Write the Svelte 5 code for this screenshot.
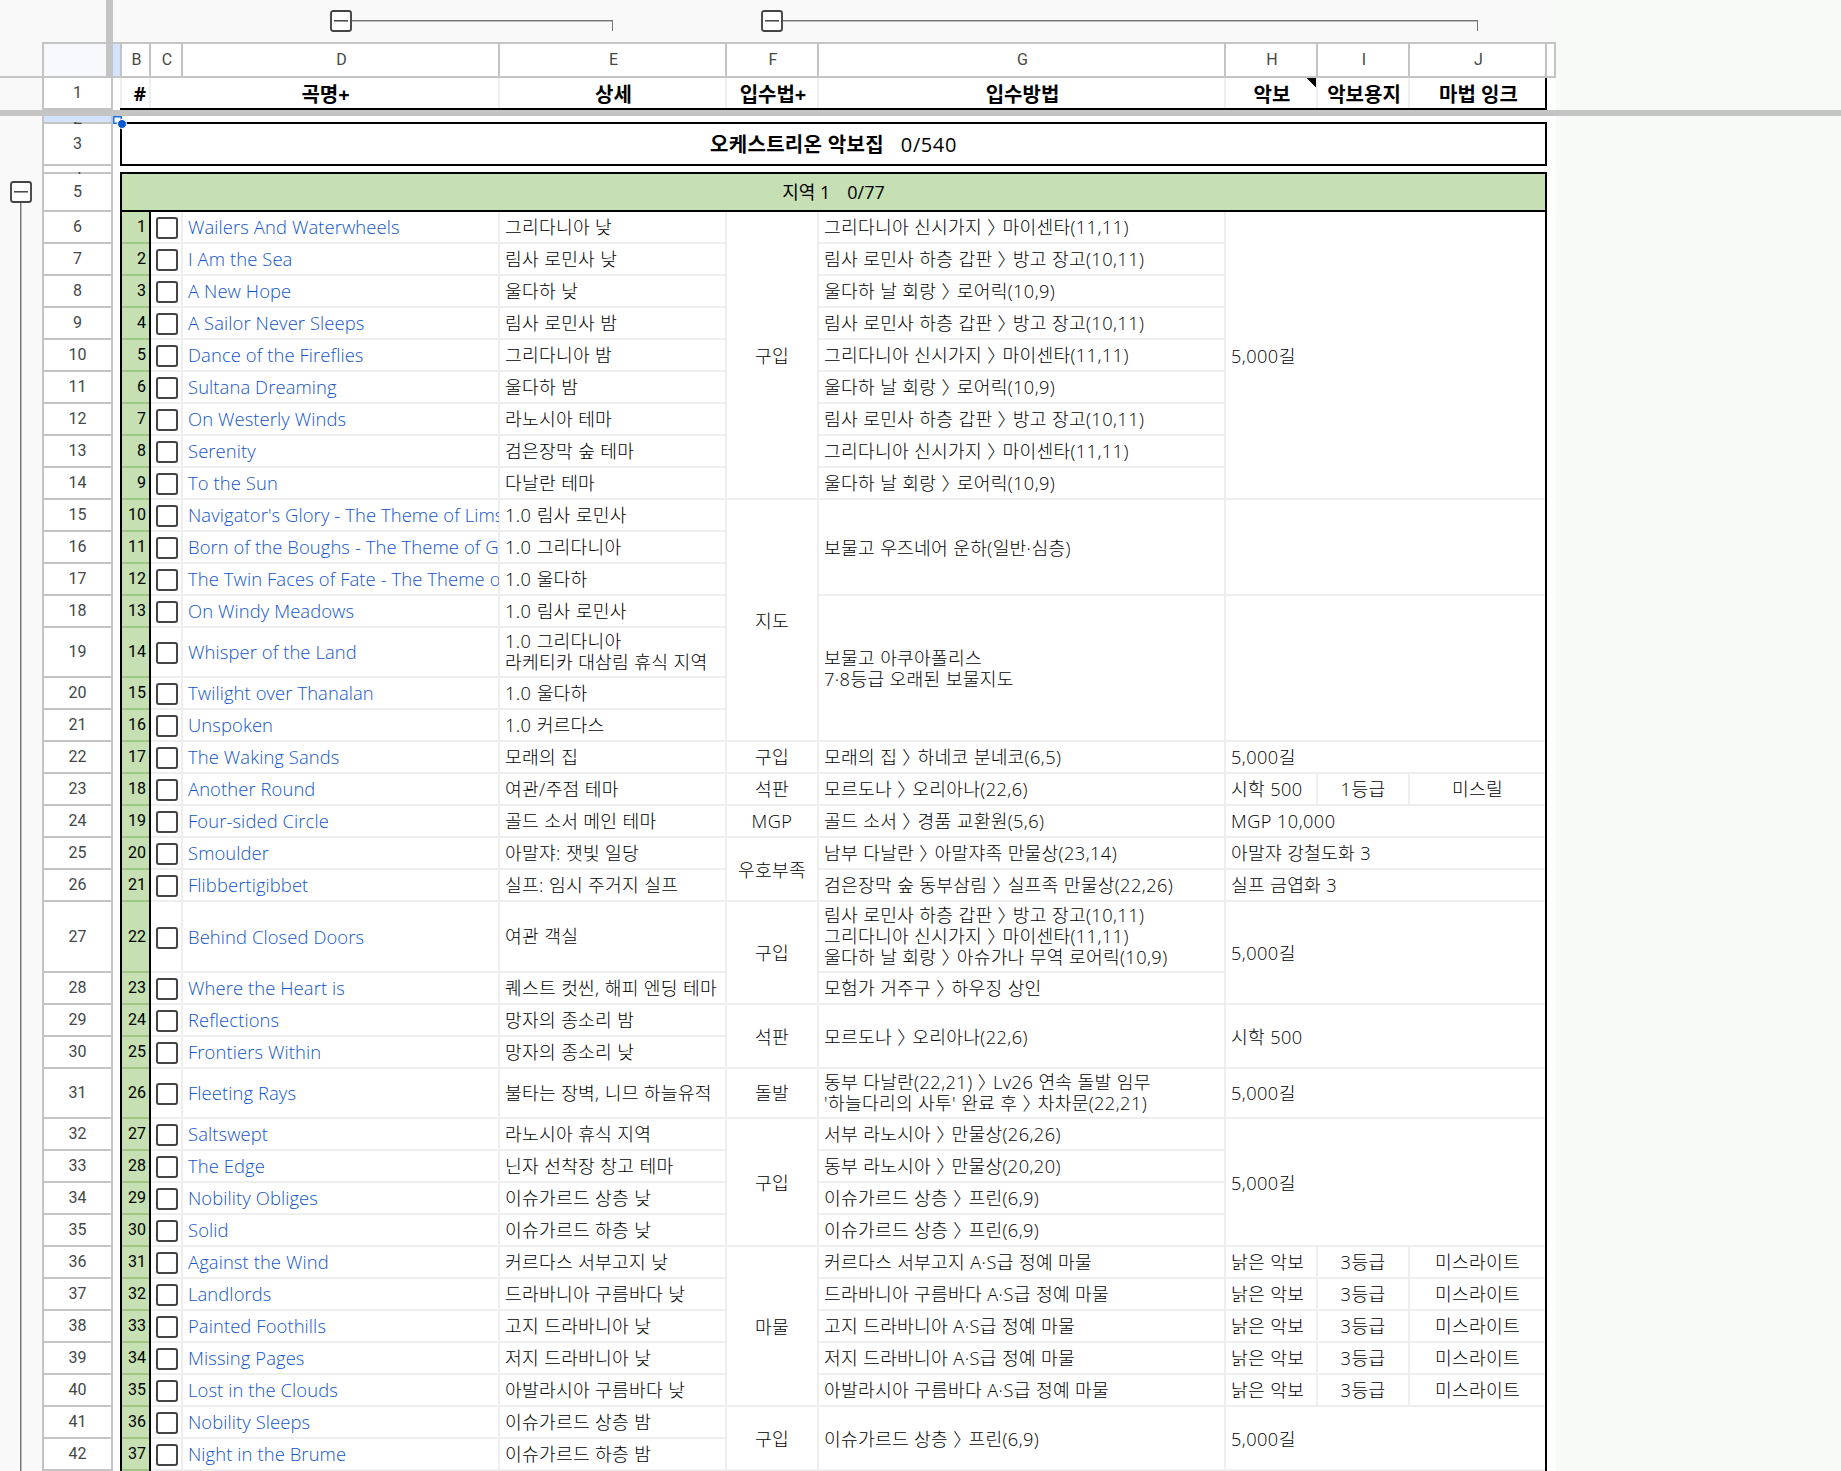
<script lang="ts">
  type Cell = { text: string; rows?: number };
  type Song = {
    name: string;
    desc: string;
    height?: number;
    how?: Cell;
    where?: Cell;
    price?: Cell;
    paper?: string;
    ink?: string;
  };

  const limsa = '림사 로민사 하층 갑판 〉방고 장고(10,11)';
  const gridania = '그리다니아 신시가지 〉마이센타(11,11)';
  const uldah = '울다하 날 회랑 〉로어릭(10,9)';
  const one = (text: string) => ({ text });
  const hunt = { price: one('낡은 악보'), paper: '3등급', ink: '미스라이트' };

  const songs: Song[] = [
    { name: 'Wailers And Waterwheels', desc: '그리다니아 낮', how: { text: '구입', rows: 9 }, where: one(gridania), price: { text: '5,000길', rows: 9 } },
    { name: 'I Am the Sea', desc: '림사 로민사 낮', where: one(limsa) },
    { name: 'A New Hope', desc: '울다하 낮', where: one(uldah) },
    { name: 'A Sailor Never Sleeps', desc: '림사 로민사 밤', where: one(limsa) },
    { name: 'Dance of the Fireflies', desc: '그리다니아 밤', where: one(gridania) },
    { name: 'Sultana Dreaming', desc: '울다하 밤', where: one(uldah) },
    { name: 'On Westerly Winds', desc: '라노시아 테마', where: one(limsa) },
    { name: 'Serenity', desc: '검은장막 숲 테마', where: one(gridania) },
    { name: 'To the Sun', desc: '다날란 테마', where: one(uldah) },
    { name: "Navigator's Glory - The Theme of Lims", desc: '1.0 림사 로민사', how: { text: '지도', rows: 7 }, where: { text: '보물고 우즈네어 운하(일반·심층)', rows: 3 }, price: { text: '', rows: 3 } },
    { name: 'Born of the Boughs - The Theme of G', desc: '1.0 그리다니아' },
    { name: 'The Twin Faces of Fate - The Theme of', desc: '1.0 울다하' },
    { name: 'On Windy Meadows', desc: '1.0 림사 로민사', where: { text: '보물고 아쿠아폴리스\n7·8등급 오래된 보물지도', rows: 4 }, price: { text: '', rows: 4 } },
    { name: 'Whisper of the Land', desc: '1.0 그리다니아\n라케티카 대삼림 휴식 지역', height: 50 },
    { name: 'Twilight over Thanalan', desc: '1.0 울다하' },
    { name: 'Unspoken', desc: '1.0 커르다스' },
    { name: 'The Waking Sands', desc: '모래의 집', how: one('구입'), where: one('모래의 집 〉하네코 분네코(6,5)'), price: one('5,000길') },
    { name: 'Another Round', desc: '여관/주점 테마', how: one('석판'), where: one('모르도나 〉오리아나(22,6)'), price: one('시학 500'), paper: '1등급', ink: '미스릴' },
    { name: 'Four-sided Circle', desc: '골드 소서 메인 테마', how: one('MGP'), where: one('골드 소서 〉경품 교환원(5,6)'), price: one('MGP 10,000') },
    { name: 'Smoulder', desc: '아말쟈: 잿빛 일당', how: { text: '우호부족', rows: 2 }, where: one('남부 다날란 〉아말쟈족 만물상(23,14)'), price: one('아말쟈 강철도화 3') },
    { name: 'Flibbertigibbet', desc: '실프: 임시 주거지 실프', where: one('검은장막 숲 동부삼림 〉실프족 만물상(22,26)'), price: one('실프 금엽화 3') },
    { name: 'Behind Closed Doors', desc: '여관 객실', height: 71, how: { text: '구입', rows: 2 }, where: one(`${limsa}\n${gridania}\n울다하 날 회랑 〉아슈가나 무역 로어릭(10,9)`), price: { text: '5,000길', rows: 2 } },
    { name: 'Where the Heart is', desc: '퀘스트 컷씬, 해피 엔딩 테마', where: one('모험가 거주구 〉하우징 상인') },
    { name: 'Reflections', desc: '망자의 종소리 밤', how: { text: '석판', rows: 2 }, where: { text: '모르도나 〉오리아나(22,6)', rows: 2 }, price: { text: '시학 500', rows: 2 } },
    { name: 'Frontiers Within', desc: '망자의 종소리 낮' },
    { name: 'Fleeting Rays', desc: '불타는 장벽, 니므 하늘유적', height: 50, how: one('돌발'), where: one("동부 다날란(22,21) 〉Lv26 연속 돌발 임무\n'하늘다리의 사투' 완료 후 〉차차문(22,21)"), price: one('5,000길') },
    { name: 'Saltswept', desc: '라노시아 휴식 지역', how: { text: '구입', rows: 4 }, where: one('서부 라노시아 〉만물상(26,26)'), price: { text: '5,000길', rows: 4 } },
    { name: 'The Edge', desc: '닌자 선착장 창고 테마', where: one('동부 라노시아 〉만물상(20,20)') },
    { name: 'Nobility Obliges', desc: '이슈가르드 상층 낮', where: one('이슈가르드 상층 〉프린(6,9)') },
    { name: 'Solid', desc: '이슈가르드 하층 낮', where: one('이슈가르드 상층 〉프린(6,9)') },
    { name: 'Against the Wind', desc: '커르다스 서부고지 낮', how: { text: '마물', rows: 5 }, where: one('커르다스 서부고지 A·S급 정예 마물'), ...hunt },
    { name: 'Landlords', desc: '드라바니아 구름바다 낮', where: one('드라바니아 구름바다 A·S급 정예 마물'), ...hunt },
    { name: 'Painted Foothills', desc: '고지 드라바니아 낮', where: one('고지 드라바니아 A·S급 정예 마물'), ...hunt },
    { name: 'Missing Pages', desc: '저지 드라바니아 낮', where: one('저지 드라바니아 A·S급 정예 마물'), ...hunt },
    { name: 'Lost in the Clouds', desc: '아발라시아 구름바다 낮', where: one('아발라시아 구름바다 A·S급 정예 마물'), ...hunt },
    { name: 'Nobility Sleeps', desc: '이슈가르드 상층 밤', how: { text: '구입', rows: 2 }, where: { text: '이슈가르드 상층 〉프린(6,9)', rows: 2 }, price: { text: '5,000길', rows: 2 } },
    { name: 'Night in the Brume', desc: '이슈가르드 하층 밤' },
  ];

  const columnWidths = [71, 9, 29, 32, 317, 227, 92, 407, 92, 92, 137, 9];
  const letters = ['B', 'C', 'D', 'E', 'F', 'G', 'H', 'I', 'J'];

  // hangul, latin and the 〉 separator each get their own tracking
  const runs = (text: string) => text.match(/[가-힣]+|〉|[^가-힣〉]+/g) ?? [];
  const runClass = (run: string) => (run === '〉' ? 'sep' : /[가-힣]/.test(run) ? 'ko' : 'la');
</script>

{#snippet label(text: string)}
  {#each runs(text) as run}<span class={runClass(run)}>{run}</span>{/each}
{/snippet}

{#snippet toggle()}
  <svg class="toggle" width="22" height="22" viewBox="0 0 22 22">
    <rect x="1" y="1" width="20" height="20" rx="2.2" fill="#fff" stroke="#444" stroke-width="1.9" />
    <path d="M4 10.8H18" stroke="#444" stroke-width="1.5" />
  </svg>
{/snippet}

<div class="app">
  <div class="row-groups">
    <div class="corner"></div>
    <div class="row-group">
      {@render toggle()}
      <div class="stem"></div>
    </div>
  </div>

  <div class="sheet">
    <div class="column-groups">
      <div class="column-group first">{@render toggle()}<div class="branch"></div></div>
      <div class="column-group second">{@render toggle()}<div class="branch"></div></div>
    </div>

    <table>
      <colgroup>
        {#each columnWidths as width}<col style="width: {width}px" />{/each}
      </colgroup>
      <tbody>
        <tr class="letters">
          <th class="select-all"></th>
          <th class="active"></th>
          {#each letters as letter}<th>{letter}</th>{/each}
          <th></th>
        </tr>
        <tr class="titles">
          <th>1</th>
          <td class="gutter dot light"></td>
          <td class="hash">#</td>
          <td colspan="2">곡명+</td>
          <td>상세</td>
          <td>입수법+</td>
          <td>입수방법</td>
          <td class="note">악보</td>
          <td>악보용지</td>
          <td class="end">마법 잉크</td>
          <td class="rest"></td>
        </tr>
        <tr class="freeze"><td colspan="12"></td></tr>
        <tr class="thin">
          <th class="active"><span>2</span></th>
          <td class="gutter dot selected"><i></i></td>
          <td class="line" colspan="9"></td>
          <td class="rest"></td>
        </tr>
        <tr class="book">
          <th>3</th>
          <td class="gutter edge"></td>
          <td class="banner" colspan="9"><b>오케스트리온 악보집</b><span class="count">0/540</span></td>
          <td class="rest"></td>
        </tr>
        <tr class="thin">
          <th><span>4</span></th>
          <td class="gutter dot"></td>
          <td class="line" colspan="9"></td>
          <td class="rest"></td>
        </tr>
        <tr class="region">
          <th>5</th>
          <td class="gutter edge"></td>
          <td class="banner green" colspan="9">지역 1<span class="count">0/77</span></td>
          <td class="rest"></td>
        </tr>
        {#each songs as song, i}
          <tr style="height: {song.height ?? 32}px">
            <th>{i + 6}</th>
            <td class="gutter edge"></td>
            <td class="index">{i + 1}</td>
            <td class="check"><span class="box"></span></td>
            <td class="name"><div>{song.name}</div></td>
            <td>{@render label(song.desc)}</td>
            {#if song.how}
              <td class="center" rowspan={song.how.rows ?? 1}>{@render label(song.how.text)}</td>
            {/if}
            {#if song.where}
              <td rowspan={song.where.rows ?? 1}>{@render label(song.where.text)}</td>
            {/if}
            {#if song.paper && song.price}
              <td>{@render label(song.price.text)}</td>
              <td class="center">{@render label(song.paper)}</td>
              <td class="center end">{@render label(song.ink ?? '')}</td>
            {:else if song.price}
              <td class="end" colspan="3" rowspan={song.price.rows ?? 1}>{@render label(song.price.text)}</td>
            {/if}
            <td class="rest"></td>
          </tr>
        {/each}
      </tbody>
    </table>
  </div>
  <div class="freeze-column"></div>
  <div class="freeze-row"></div>
</div>

<style>
  :global(body) {
    margin: 0;
    background: #f8faf7;
    overflow: hidden;
  }

  .app {
    position: relative;
    display: flex;
    width: 1841px;
    height: 1471px;
    overflow: hidden;
    font-family: 'Open Sans', 'Noto Sans CJK KR', sans-serif;
    color: #000;
  }

  .row-groups {
    flex: none;
    width: 42px;
    background: #f9f9f9;
  }

  .corner {
    height: 76px;
    border-bottom: 2px solid #c4c4c4;
  }

  .row-group {
    display: flex;
    flex-direction: column;
    padding: 103px 0 0 10px;
  }

  .toggle {
    flex: none;
    display: block;
  }

  .stem {
    width: 1px;
    height: 1268px;
    margin-left: 10px;
    background: #757575;
    border-right: 1px solid #bdbdbd;
  }

  .sheet {
    flex: none;
    width: 1514px;
  }

  .column-groups {
    display: flex;
    height: 42px;
    background: #f9f9f9;
  }

  .column-group {
    display: flex;
    height: 22px;
    margin-top: 10px;
  }

  .column-group.first {
    width: 283px;
    margin-left: 288px;
  }

  .column-group.second {
    width: 717px;
    margin-left: 148px;
  }

  .branch {
    flex: 1;
    height: 10px;
    margin-top: 10px;
    border-top: 1px solid #757575;
    border-right: 1px solid #757575;
    box-shadow: inset 0 1px #bdbdbd;
  }

  table {
    width: 1514px;
    table-layout: fixed;
    border-spacing: 0;
    background: #fff;
  }

  th,
  td {
    box-sizing: border-box;
    padding: 0 2px 2px 0;
    vertical-align: middle;
  }

  th {
    font: 400 16px/18px Roboto, sans-serif;
    color: #444746;
    text-align: center;
    box-shadow: inset -2px 0 #c4c4c4, inset 0 -2px #c4c4c4;
  }

  th:first-child {
    padding-left: 2px;
    box-shadow: inset 2px 0 #c4c4c4, inset -2px 0 #c4c4c4, inset 0 -2px #c4c4c4;
  }

  td {
    padding-left: 5px;
    font-size: 18.2px;
    font-weight: 300;
    line-height: 21px;
    white-space: pre;
    box-shadow: inset -2px 0 #eee, inset 0 -2px #eee;
  }

  td[rowspan]:not([rowspan='1']) {
    padding-top: 2px;
  }

  .letters {
    height: 36px;
  }

  .letters th {
    padding: 0;
    box-shadow: inset -2px 0 #c4c4c4, inset 0 2px #c4c4c4, inset 0 -2px #c4c4c4;
  }

  .letters th.select-all {
    background: #f8f9fc;
    box-shadow: inset 2px 0 #c4c4c4, inset 0 2px #c4c4c4, inset 0 -2px #c4c4c4;
  }

  th.active,
  .letters th.active {
    background: #d3e3fd;
  }

  .titles {
    height: 32px;
  }

  .titles td {
    padding: 2px 0 2px;
    font-size: 20px;
    font-weight: 700;
    text-align: center;
    box-shadow: inset 0 -2px #000, inset -2px 0 #eee;
  }

  .titles td.hash {
    padding-right: 5px;
    font-size: 19px;
    text-align: right;
  }

  td.note {
    background: linear-gradient(to top right, transparent 50%, #000 50%) no-repeat right 2px top / 9px 9px;
  }

  td.end,
  .titles td.end {
    box-shadow: inset -2px 0 #000, inset 0 -2px #eee;
  }

  .titles td.end {
    box-shadow: inset -2px 0 #000, inset 0 -2px #000;
  }

  .freeze {
    height: 6px;
  }

  .freeze td {
    padding: 0;
    line-height: 0;
    background: #c4c4c4;
    box-shadow: none;
  }

  .thin {
    height: 8px;
  }

  .thin td,
  .thin th {
    padding: 0;
    line-height: 0;
  }

  .thin th {
    position: relative;
  }

  /* only the foot of the number shows over the border */
  .thin th span {
    position: absolute;
    right: 0;
    bottom: 0;
    left: 0;
    display: flex;
    align-items: flex-end;
    justify-content: center;
    height: 2px;
    line-height: 10px;
    overflow: hidden;
  }

  td.line {
    box-shadow: inset 0 -2px #000;
  }

  td.gutter,
  .titles td.gutter {
    position: relative;
    padding: 0;
    box-shadow: none;
  }

  .titles td.light {
    box-shadow: inset -2px 0 #eee;
  }

  td.gutter.edge {
    box-shadow: inset -2px 0 #000;
  }

  .dot::after {
    content: '';
    position: absolute;
    right: 0;
    bottom: 0;
    width: 2px;
    height: 2px;
    background: #000;
  }

  td.gutter.selected {
    box-shadow: inset 0 0 0 1.5px #1a73e8;
  }

  .selected i {
    position: absolute;
    z-index: 1;
    top: 3px;
    left: 4px;
    width: 8px;
    height: 8px;
    border: 1px solid #fff;
    border-radius: 50%;
    background: #0b57d0;
  }

  td.rest,
  .titles td.rest {
    padding: 0;
    box-shadow: none;
  }

  .book {
    height: 42px;
  }

  .region {
    height: 38px;
  }

  .banner {
    padding-left: 0;
    font-weight: 500;
    text-align: center;
    box-shadow: inset -2px 0 #000, inset 0 -2px #000;
  }

  .book .banner {
    font-size: 20px;
  }

  .book b {
    font-weight: 700;
    letter-spacing: 0.3px;
  }

  .book .count {
    letter-spacing: 0.6px;
  }

  .banner.green {
    font-size: 18px;
    font-weight: 400;
    background: #c6e0b4;
  }

  .count {
    margin-left: 17px;
  }

  td.index {
    padding: 0 5px 2px 0;
    font: 400 16px/18px Roboto, sans-serif;
    text-align: right;
    background: #c6e0b4;
    box-shadow: inset -2px 0 #000, inset 0 -2px #9fc687;
  }

  td.check {
    padding: 2px 0 2px 5px;
  }

  .box {
    display: block;
    box-sizing: border-box;
    width: 22px;
    height: 22px;
    border: 2px solid #444;
    border-radius: 3px;
  }

  .name {
    font-size: 18.4px;
    letter-spacing: 0.1px;
    color: #1155cc;
  }

  .name div {
    width: 311px;
    line-height: 26px;
    overflow-x: clip;
  }

  .center {
    padding-left: 0;
    text-align: center;
  }

  .freeze-column {
    position: absolute;
    top: 0;
    left: 106px;
    width: 7px;
    height: 78px;
    background: #c4c4c4;
  }

  .freeze-row {
    position: absolute;
    top: 110px;
    left: 0;
    width: 1841px;
    height: 6px;
    background: #c4c4c4;
  }

  .ko {
    letter-spacing: 0.25px;
  }

  .la {
    letter-spacing: 0.45px;
  }

  .sep {
    margin-right: -3px;
  }
</style>
